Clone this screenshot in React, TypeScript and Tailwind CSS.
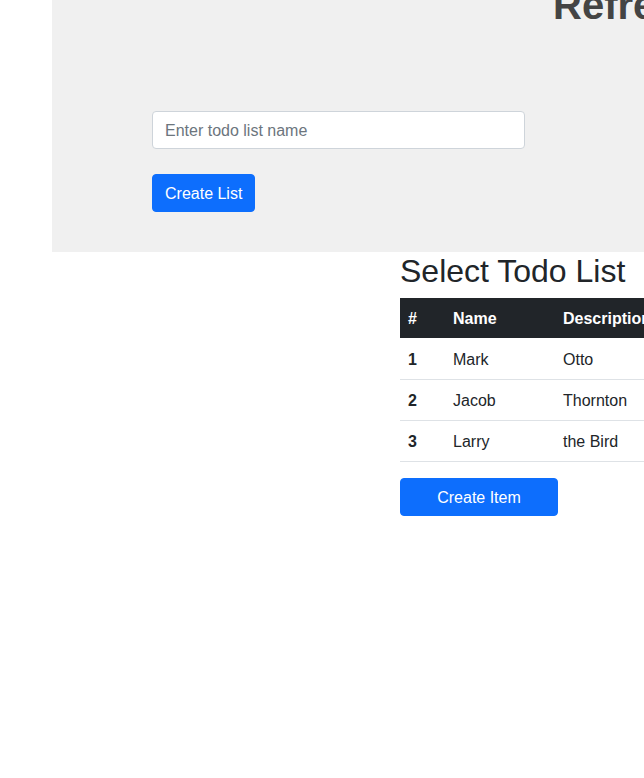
const rows = [
  { id: 1, name: "Mark", description: "Otto" },
  { id: 2, name: "Jacob", description: "Thornton" },
  { id: 3, name: "Larry", description: "the Bird" },
];

export default function App() {
  return (
    <div className="min-h-screen bg-white font-['Liberation_Sans',Arial,sans-serif] text-[#212529]">
      {/* header panel */}
      <div className="ml-[52px] w-[1200px] flex flex-col items-start bg-[#f0f0f0] pl-[100px] pb-[40px]">
        <h1 className="-mt-[19px] h-[48px] pl-[401px] text-[40px] leading-[48px] font-bold text-[#444] whitespace-nowrap">
          Refresh Todo Lists
        </h1>
        <input
          type="text"
          placeholder="Enter todo list name"
          className="mt-[82px] h-[38px] w-[373px] rounded border border-[#ced4da] bg-white px-3 pt-px text-base text-[#212529] placeholder:text-[#6c757d] outline-none"
        />
        <button className="mt-[25px] h-[38px] rounded border border-[#0d6efd] bg-[#0d6efd] px-3 pt-[2px] text-base text-white">
          Create List
        </button>
      </div>

      {/* list selection */}
      <div className="ml-[400px] w-[520px]">
        <h2 className="mb-2 text-[32px] leading-[1.2]">Select Todo List</h2>
        <table className="w-full table-fixed border-collapse text-base">
          <colgroup>
            <col className="w-[45px]" />
            <col className="w-[110px]" />
            <col />
          </colgroup>
          <thead>
            <tr className="h-[40px] bg-[#212529] text-left text-white">
              <th className="px-2 pt-[2px] font-bold">#</th>
              <th className="px-2 pt-[2px] font-bold">Name</th>
              <th className="px-2 pt-[2px] font-bold">Description</th>
            </tr>
          </thead>
          <tbody>
            {rows.map((r) => (
              <tr key={r.id} className="h-[41px] border-b border-[#dee2e6]">
                <td className="px-2 pt-[2px] font-bold">{r.id}</td>
                <td className="px-2 pt-[2px]">{r.name}</td>
                <td className="px-2 pt-[2px]">{r.description}</td>
              </tr>
            ))}
          </tbody>
        </table>
        <button className="mt-4 h-[38px] w-[158px] rounded border border-[#0d6efd] bg-[#0d6efd] pt-[2px] text-base text-white">
          Create Item
        </button>
      </div>
    </div>
  );
}
